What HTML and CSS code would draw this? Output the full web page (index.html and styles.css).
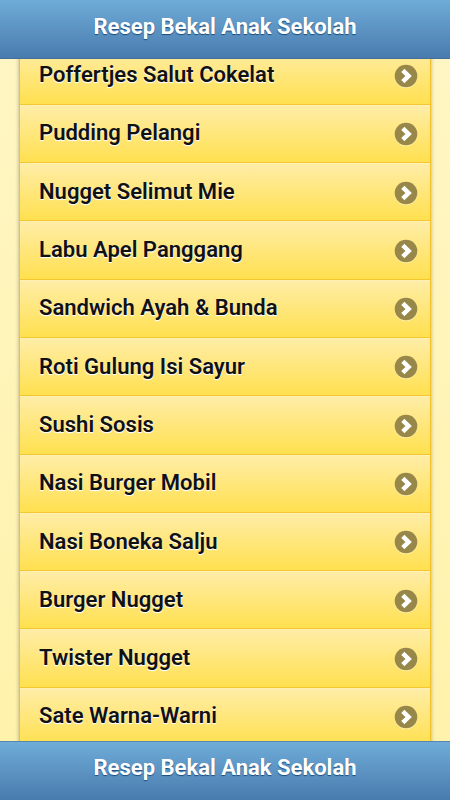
FILE: index.html
```html
<!DOCTYPE html>
<html lang="id">
  <head>
    <meta charset="UTF-8" />
    <meta name="viewport" content="width=device-width, initial-scale=1.0" />
    <title>Resep Bekal Anak Sekolah</title>
    <link rel="stylesheet" href="styles.css">
  </head>
  <body>
    <svg width="0" height="0" class="defs">
      <symbol id="arrow" viewBox="0 0 24 24">
        <circle cx="12" cy="12" r="11.3" fill="#978849" />
        <path d="M8.8 6.4 L14.6 12 L8.8 17.6" fill="none" stroke="#fff" stroke-width="4.5" />
      </symbol>
    </svg>
    <header class="bar header"><h1>Resep Bekal Anak Sekolah</h1></header>
    <main class="content">
      <ul class="list">
        <li><span>Poffertjes Salut Cokelat</span><svg class="icon"><use href="#arrow" /></svg></li>
        <li><span>Pudding Pelangi</span><svg class="icon"><use href="#arrow" /></svg></li>
        <li><span>Nugget Selimut Mie</span><svg class="icon"><use href="#arrow" /></svg></li>
        <li><span>Labu Apel Panggang</span><svg class="icon"><use href="#arrow" /></svg></li>
        <li><span>Sandwich Ayah &amp; Bunda</span><svg class="icon"><use href="#arrow" /></svg></li>
        <li><span>Roti Gulung Isi Sayur</span><svg class="icon"><use href="#arrow" /></svg></li>
        <li><span>Sushi Sosis</span><svg class="icon"><use href="#arrow" /></svg></li>
        <li><span>Nasi Burger Mobil</span><svg class="icon"><use href="#arrow" /></svg></li>
        <li><span>Nasi Boneka Salju</span><svg class="icon"><use href="#arrow" /></svg></li>
        <li><span>Burger Nugget</span><svg class="icon"><use href="#arrow" /></svg></li>
        <li><span>Twister Nugget</span><svg class="icon"><use href="#arrow" /></svg></li>
        <li><span>Sate Warna-Warni</span><svg class="icon"><use href="#arrow" /></svg></li>
      </ul>
    </main>
    <footer class="bar footer"><h1>Resep Bekal Anak Sekolah</h1></footer>
  </body>
</html>
```
FILE: styles.css
```css
* {
  box-sizing: border-box;
}

body {
  display: flex;
  flex-direction: column;
  height: 800px;
  margin: 0;
  overflow: hidden;
  font-family: Roboto, sans-serif;
  font-weight: 600;
  background: linear-gradient(#fff6c5, #fff2aa);
}

.defs {
  position: absolute;
}

.bar {
  flex: none;
  height: 59px;
  background: linear-gradient(#6facd8, #497bae);
  text-align: center;
}

.bar h1 {
  margin: 0;
  padding-top: 13px;
  font-size: 22px;
  font-weight: 700;
  line-height: 27px;
  color: #fff;
  text-shadow: 0 1px 1px #194b7e;
}

.header {
  border-bottom: 1px solid #456f9a;
}

.footer {
  border-top: 1px solid #5688af;
}

.footer h1 {
  padding-top: 12px;
}

.content {
  flex: 1;
  min-height: 0;
  padding: 0 19px;
  overflow: hidden;
}

.list {
  margin: -12.5px 0 0;
  padding: 0;
  list-style: none;
  border: 1px solid #f2c12b;
  border-width: 0 1px;
  box-shadow: 0 1px 4px rgba(0, 0, 0, 0.3);
}

.list li {
  display: flex;
  justify-content: space-between;
  align-items: center;
  height: 58.3px;
  padding: 0 12px 0 19px;
  border-bottom: 1px solid #f4c62f;
  background: linear-gradient(#ffeda8, #ffe04f);
  box-shadow: inset 0 1px 0 #fff0b5;
  font-size: 22.05px;
  line-height: 28px;
  color: #111;
  text-shadow: 0 1px 0 #fff, 0 1px 1px #fff;
}

.icon {
  width: 24px;
  height: 24px;
  margin-top: 1.6px;
  filter: drop-shadow(0 1px 0 rgba(255, 255, 255, 0.4));
}
```
